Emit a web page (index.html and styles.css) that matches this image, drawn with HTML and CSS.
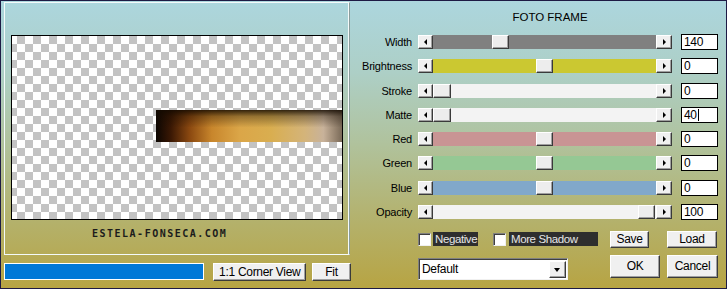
FILE: index.html
```html
<!DOCTYPE html>
<html lang="en">
<head>
    <meta charset="UTF-8" />
    <title>Foto Frame</title>
    <link rel="stylesheet" href="styles.css">
</head>
<body>
    <div class="dialog">
        <div class="left">
            <div class="preview-group">
                <div class="canvas">
                    <div class="photo"></div>
                </div>
                <div class="credit">ESTELA-FONSECA.COM</div>
            </div>
            <div class="left-bar">
                <div class="progress"></div>
                <button class="btn corner">1:1 Corner View</button>
                <button class="btn fit">Fit</button>
            </div>
        </div>

        <div class="right">
            <div class="title">FOTO FRAME</div>

            <div class="row">
                <span class="label">Width</span>
                <div class="slider">
                    <span class="arrow left-arrow"></span>
                    <div class="track grey"><span class="thumb" style="margin-left: 59px"></span></div>
                    <span class="arrow right-arrow"></span>
                </div>
                <div class="value">140</div>
            </div>
            <div class="row">
                <span class="label">Brightness</span>
                <div class="slider">
                    <span class="arrow left-arrow"></span>
                    <div class="track yellow"><span class="thumb" style="margin-left: 103px"></span></div>
                    <span class="arrow right-arrow"></span>
                </div>
                <div class="value">0</div>
            </div>
            <div class="row">
                <span class="label">Stroke</span>
                <div class="slider">
                    <span class="arrow left-arrow"></span>
                    <div class="track light"><span class="thumb wide" style="margin-left: 0px"></span></div>
                    <span class="arrow right-arrow"></span>
                </div>
                <div class="value">0</div>
            </div>
            <div class="row">
                <span class="label">Matte</span>
                <div class="slider">
                    <span class="arrow left-arrow"></span>
                    <div class="track light"><span class="thumb wide" style="margin-left: 0px"></span></div>
                    <span class="arrow right-arrow"></span>
                </div>
                <div class="value">40<span class="caret"></span></div>
            </div>
            <div class="row">
                <span class="label">Red</span>
                <div class="slider">
                    <span class="arrow left-arrow"></span>
                    <div class="track red"><span class="thumb" style="margin-left: 103px"></span></div>
                    <span class="arrow right-arrow"></span>
                </div>
                <div class="value">0</div>
            </div>
            <div class="row">
                <span class="label">Green</span>
                <div class="slider">
                    <span class="arrow left-arrow"></span>
                    <div class="track green"><span class="thumb" style="margin-left: 103px"></span></div>
                    <span class="arrow right-arrow"></span>
                </div>
                <div class="value">0</div>
            </div>
            <div class="row">
                <span class="label">Blue</span>
                <div class="slider">
                    <span class="arrow left-arrow"></span>
                    <div class="track blue"><span class="thumb" style="margin-left: 103px"></span></div>
                    <span class="arrow right-arrow"></span>
                </div>
                <div class="value">0</div>
            </div>
            <div class="row">
                <span class="label">Opacity</span>
                <div class="slider">
                    <span class="arrow left-arrow"></span>
                    <div class="track light"><span class="thumb" style="margin-left: 205px"></span></div>
                    <span class="arrow right-arrow"></span>
                </div>
                <div class="value">100</div>
            </div>

            <div class="options">
                <div class="checks">
                    <span class="checkbox"></span>
                    <span class="check-label negative">Negative</span>
                    <span class="checkbox second"></span>
                    <span class="check-label shadow">More Shadow</span>
                </div>
                <button class="btn save">Save</button>
                <button class="btn load">Load</button>

                <div class="select">
                    <span class="select-text">Default</span>
                    <span class="select-arrow"></span>
                </div>
                <button class="btn ok">OK</button>
                <button class="btn cancel">Cancel</button>
            </div>
        </div>
    </div>
</body>
</html>
```

FILE: styles.css
```css
* {
    box-sizing: border-box;
}

body {
    margin: 0;
    font-family: "Liberation Sans", Arial, sans-serif;
    font-size: 11px;
    color: #000;
}

.dialog {
    width: 727px;
    height: 289px;
    border: 1px solid #1d1a44;
    padding: 1px 0 0 3px;
    display: flex;
    gap: 5px;
    background: linear-gradient(to bottom, #acd6de 0%, #adcfc6 25%, #b0c29c 50%, #b3b474 72%, #b7a443 100%);
}

/* left side: preview */

.left {
    width: 347px;
    display: flex;
    flex-direction: column;
}

.preview-group {
    width: 346px;
    height: 253px;
    border: 1px solid;
    border-color: #f4fafa #8a9c9c #f4fafa #f4fafa;
    box-shadow: inset -1px 0 #f4fafa;
    padding: 32px 0 0 6px;
}

.canvas {
    position: relative;
    width: 332px;
    height: 185px;
    border: 1px solid #000;
    overflow: hidden;
    background-color: #fff;
    background-image: repeating-conic-gradient(#c3c3c3 0 25%, #fff 0 50%);
    background-size: 16px 16px;
    background-position: -3px 0;
}

.photo {
    position: absolute;
    right: 0;
    top: 74px;
    width: 186px;
    height: 32px;
    background:
        linear-gradient(to bottom, rgba(20, 10, 0, 0.85) 0, rgba(20, 10, 0, 0.35) 20%, rgba(0, 0, 0, 0) 55%),
        linear-gradient(to right, #0c0602 0%, #3a1804 8%, #8a4810 18%, #c8862c 30%, #dba648 45%, #d9ae50 62%, #d4b47a 80%, #c8b29a 90%, #7a6a58 100%);
}

.credit {
    margin: 9px 0 0 81px;
    font-family: "DejaVu Sans Mono", monospace;
    font-weight: bold;
    font-size: 10px;
    line-height: 10px;
    letter-spacing: 1.5px;
    color: #1c1c1c;
}

.left-bar {
    display: flex;
    align-items: flex-start;
    margin-top: 8px;
}

.progress {
    width: 201px;
    height: 17px;
    border: 1px solid #fff;
    background: #0078d7;
}

/* buttons */

.btn {
    padding: 0;
    font-family: "Liberation Sans", Arial, sans-serif;
    font-size: 12px;
    letter-spacing: -0.3px;
    white-space: nowrap;
    color: #000;
    background: #f0f0f0;
    border: 1px solid;
    border-color: #fff #3a3a3a #3a3a3a #fff;
    box-shadow: inset -1px -1px #a0a0a0;
}

.corner {
    width: 93px;
    height: 18px;
    margin-left: 9px;
}

.fit {
    width: 39px;
    height: 18px;
    margin-left: 6px;
}

/* right side: controls */

.right {
    width: 362px;
    display: flex;
    flex-direction: column;
}

.title {
    height: 27.85px;
    padding: 8.5px 0 0 26px;
    line-height: 13px;
    font-size: 11.5px;
    text-align: center;
}

.row {
    display: flex;
    align-items: center;
    height: 24.3px;
}

.label {
    width: 56px;
    margin-right: 6px;
    text-align: right;
    letter-spacing: -0.2px;
}

.slider {
    width: 254px;
    height: 14px;
    display: flex;
}

.arrow {
    position: relative;
    width: 15px;
    height: 14px;
    background: #f0f0f0;
    border: 1px solid;
    border-color: #fff #3a3a3a #3a3a3a #fff;
    box-shadow: inset -1px -1px #a0a0a0;
}

.right-arrow {
    width: 16px;
}

.arrow::after {
    content: "";
    position: absolute;
    top: 3px;
    left: 5px;
    border-top: 3px solid transparent;
    border-bottom: 3px solid transparent;
}

.left-arrow::after {
    border-right: 3px solid #000;
}

.right-arrow::after {
    left: 6px;
    border-left: 3px solid #000;
}

.track {
    flex: 1;
    display: flex;
}

.track.grey { background: #808080; }
.track.yellow { background: #cbc831; }
.track.light { background: #f3f3f3; }
.track.red { background: #c99494; }
.track.green { background: #95c894; }
.track.blue { background: #81a8ca; }

.thumb {
    width: 17px;
    height: 14px;
    background: #ededed;
    border: 1px solid;
    border-color: #fff #3a3a3a #3a3a3a #fff;
    box-shadow: inset -1px -1px #a0a0a0;
}

.thumb.wide {
    width: 18px;
}

.value {
    width: 37px;
    height: 16px;
    margin-left: 9px;
    padding-left: 2px;
    background: #fff;
    border: 1px solid #000;
    font-size: 12px;
    line-height: 14px;
    letter-spacing: -0.3px;
}

.caret {
    display: inline-block;
    width: 1px;
    height: 12px;
    margin-left: 1px;
    background: #000;
    vertical-align: -2px;
}

.options {
    display: grid;
    grid-template-columns: 192px 57px 51px;
    grid-template-rows: 17px 25px;
    row-gap: 7px;
    margin: 6.75px 0 0 62px;
}

.checks {
    display: flex;
    align-items: center;
}

.checkbox {
    width: 13px;
    height: 13px;
    background: #fff;
    border: 1px solid;
    border-color: #808080 #f0f0f0 #f0f0f0 #808080;
    box-shadow: inset 1px 1px #404040;
}

.checkbox.second {
    margin-left: 15px;
}

.check-label {
    height: 14px;
    padding: 0 1px 0 2px;
    background: #2e2e2e;
    color: #e6e6e6;
    font-size: 11.5px;
    line-height: 14px;
    letter-spacing: -0.4px;
    white-space: nowrap;
}

.negative {
    width: 45px;
    margin-left: 2px;
}

.shadow {
    width: 89px;
    margin-left: 3px;
}

.save {
    width: 39px;
    height: 17px;
}

.load {
    width: 50px;
    height: 17px;
}

.ok {
    width: 50px;
    height: 23px;
}

.cancel {
    width: 51px;
    height: 23px;
}

.select {
    display: flex;
    align-items: center;
    justify-content: space-between;
    width: 150px;
    height: 22px;
    margin-top: 3px;
    padding: 0 1px 0 3px;
    background: #fff;
    border: 1px solid;
    border-color: #808080 #f0f0f0 #f0f0f0 #808080;
    box-shadow: inset 1px 1px #404040;
    font-size: 12px;
    letter-spacing: -0.3px;
}

.select-arrow {
    position: relative;
    width: 17px;
    height: 17px;
    margin-top: 1px;
    background: #f0f0f0;
    border: 1px solid;
    border-color: #fff #3a3a3a #3a3a3a #fff;
    box-shadow: inset -1px -1px #a0a0a0;
}

.select-arrow::after {
    content: "";
    position: absolute;
    top: 6px;
    left: 4px;
    border-left: 3.5px solid transparent;
    border-right: 3.5px solid transparent;
    border-top: 4px solid #000;
}
```
